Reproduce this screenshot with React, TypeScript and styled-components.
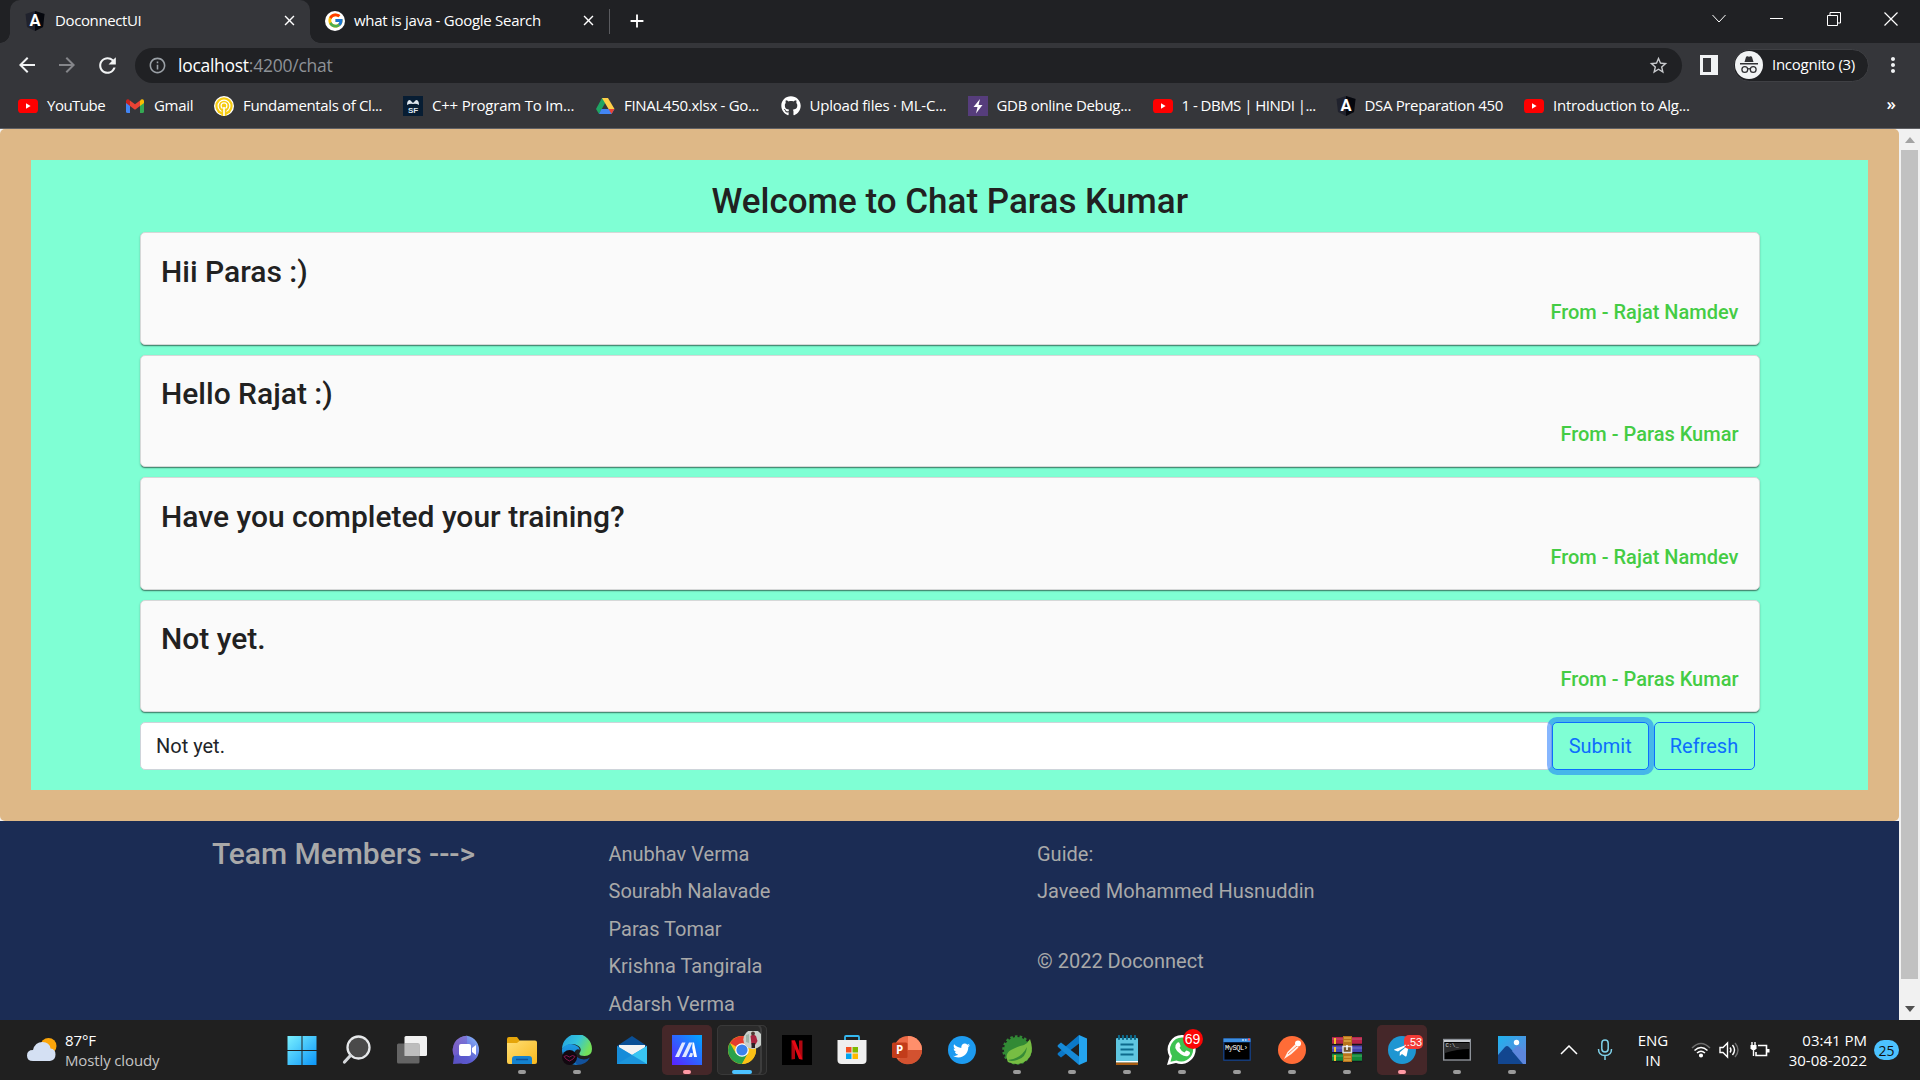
import React from 'react';
import styled, { createGlobalStyle } from 'styled-components';
import { FaGithub, FaTwitter, FaTelegramPlane } from 'react-icons/fa';
import { FcGoogle } from 'react-icons/fc';
import { MdArrowBack, MdArrowForward, MdRefresh, MdInfoOutline, MdStarBorder, MdAdd, MdClose, MdMoreVert } from 'react-icons/md';

const Global = createGlobalStyle`
  * { box-sizing: border-box; }
  html, body { margin: 0; padding: 0; overflow: hidden; }
  svg { display: block; flex: none; }
`;

const ui = `"Open Sans", "Noto Sans", sans-serif`;

const Screen = styled.div`
  width: 1920px;
  height: 1080px;
  display: flex;
  flex-direction: column;
  overflow: hidden;
  font-family: ${ui};
  background: #202124;
`;

/* ---------- browser chrome ---------- */
const TabStrip = styled.header`
  height: 43px;
  flex: none;
  display: flex;
  align-items: flex-start;
  background: #202124;
  padding-left: 10px;
`;
const Tab = styled.div<{ $active?: boolean; $w: number }>`
  position: relative;
  width: ${p => p.$w}px;
  height: 43px;
  padding: 0 12px 2px 15px;
  display: flex;
  align-items: center;
  gap: ${p => (p.$active ? 10 : 9)}px;
  color: #fff;
  background: ${p => (p.$active ? '#35363a' : 'transparent')};
  border-radius: 10px 10px 0 0;
  &::before, &::after {
    content: ${p => (p.$active ? '""' : 'none')};
    position: absolute;
    bottom: 0;
    width: 10px;
    height: 10px;
  }
  &::before {
    left: -10px;
    background: radial-gradient(circle at 0 0, transparent 9.5px, #35363a 10px);
  }
  &::after {
    right: -10px;
    background: radial-gradient(circle at 100% 0, transparent 9.5px, #35363a 10px);
  }
`;
const Label = styled.span<{ $ls?: number; $lift?: number }>`
  flex: 1;
  white-space: nowrap;
  font-size: 15px;
  line-height: 20px;
  padding-bottom: ${p => p.$lift ?? 0}px;
  letter-spacing: ${p => p.$ls ?? -0.3}px;
`;
const TabDivider = styled.i`
  width: 1px;
  height: 25px;
  margin-top: 9px;
  background: #5a5b5f;
`;
const NewTab = styled.div`
  padding: 10px 16px;
  color: #fff;
`;
const WindowButtons = styled.div`
  margin-left: auto;
  display: flex;
  height: 37px;
  align-items: center;
  color: #fff;
`;
const WindowButton = styled.div`
  width: 57.5px;
  display: flex;
  justify-content: center;
`;
const Toolbar = styled.div`
  height: 43px;
  flex: none;
  display: flex;
  align-items: center;
  background: #35363a;
  padding-top: 1px;
`;
const NavButton = styled.div<{ $dim?: boolean }>`
  width: 40px;
  display: flex;
  justify-content: center;
  color: ${p => (p.$dim ? '#85868a' : '#f1f3f4')};
`;
const NavGroup = styled.div`
  display: flex;
  align-items: center;
  width: 135px;
  padding-left: 7px;
`;
const Omnibox = styled.div`
  width: 1547px;
  height: 35px;
  border-radius: 18px;
  background: #202124;
  color: #9aa0a6;
  display: flex;
  align-items: center;
  padding: 0 13px;
  gap: 11px;
`;
const Url = styled.span`
  flex: 1;
  font-size: 17.5px;
  line-height: 24px;
  letter-spacing: -0.24px;
  color: #8e9297;
  b { color: #fff; font-weight: 400; letter-spacing: -0.28px; }
`;
const SidePanel = styled.div`
  width: 18px;
  height: 20px;
  margin: 0 15px 0 18px;
  border: 3px solid #f1f3f4;
  border-right-width: 7px;
`;
const Incognito = styled.div`
  width: 136px;
  height: 33px;
  border-radius: 17px;
  border: 1px solid #3f4044;
  background: #202124;
  color: #fff;
  display: flex;
  align-items: center;
  gap: 9px;
  padding-left: 1px;
`;
const Menu = styled.div`
  color: #f1f3f4;
  margin-left: 12px;
`;
const Bookmarks = styled.nav`
  height: 43px;
  flex: none;
  display: flex;
  align-items: center;
  padding: 0 0 3px 18px;
  background: #35363a;
  border-bottom: 1px solid #5f6064;
  color: #fff;
`;
const Bookmark = styled.div<{ $w: number }>`
  width: ${p => p.$w}px;
  display: flex;
  align-items: center;
  gap: 9px;
`;
const More = styled.span`
  margin-left: auto;
  margin-right: 24px;
  padding-bottom: 3px;
  font-size: 17px;
  line-height: 20px;
  font-weight: 600;
`;

/* ---------- page ---------- */
const Viewport = styled.div`
  height: 891px;
  flex: none;
  display: flex;
  overflow: hidden;
  background: #f4f4f4;
`;
const Page = styled.div`
  width: 1899px;
  font-family: Roboto, sans-serif;
  display: flex;
  flex-direction: column;
`;
const Frame = styled.section`
  height: 692px;
  flex: none;
  padding: 31px;
  background: #deb887;
  border-radius: 5px;
`;
const Chat = styled.main`
  height: 630px;
  padding: 20px 108.5px 0 109px;
  background: #7fffd4;
`;
const Title = styled.h2`
  margin: 0;
  height: 52px;
  padding-top: 1px;
  font-size: 35px;
  font-weight: 500;
  line-height: 42px;
  text-align: center;
  color: #212121;
`;
const Messages = styled.div`
  display: flex;
  flex-direction: column;
  gap: 10px;
`;
const Card = styled.article`
  height: 112.5px;
  padding: 20.5px 20px 0;
  border: 1px solid #d6d8d8;
  border-radius: 5px;
  background: #fafafa;
  box-shadow: 0 2px 1px -1px rgba(0, 0, 0, 0.35), 0 1px 2px rgba(0, 0, 0, 0.25);
`;
const Message = styled.h3`
  margin: 0 0 10px;
  font-size: 30px;
  font-weight: 500;
  line-height: 36px;
  color: #212121;
`;
const From = styled.div`
  font-size: 20px;
  font-weight: 500;
  line-height: 24.4px;
  text-align: right;
  color: #44cc44;
`;
const Composer = styled.div`
  display: flex;
  margin-top: 10.4px;
  height: 47.5px;
`;
const Input = styled.div`
  flex: 1;
  border: 1px solid #ced4da;
  border-radius: 5px;
  background: #fff;
  padding: 0 15px;
  font-size: 20px;
  line-height: 46.5px;
  color: #212529;
`;
const Button = styled.button<{ $w: number; $focus?: boolean }>`
  width: ${p => p.$w}px;
  height: 47.5px;
  flex: none;
  margin: 0 5px 0 0;
  padding: 0;
  border: 1px solid #0d6efd;
  border-radius: 5px;
  background: #7fffd4;
  color: #0d6efd;
  font: 400 20px/45px Roboto, sans-serif;
  box-shadow: ${p => (p.$focus ? '0 0 0 5px rgba(13, 110, 253, 0.5)' : 'none')};
`;
const Footer = styled.footer`
  flex: 1;
  display: grid;
  grid-template-columns: 396.5px 428.5px 1fr;
  padding: 14.5px 0 0 212px;
  background: #1b2c54;
  color: #a9a9a9;
  font-size: 20px;
`;
const TeamTitle = styled.div`
  font-size: 30px;
  font-weight: 500;
  line-height: 36px;
  letter-spacing: -0.04px;
`;
const FooterLine = styled.div<{ $gap?: number }>`
  height: 37.5px;
  line-height: 37.5px;
  margin-top: ${p => p.$gap ?? 0}px;
`;
const Scrollbar = styled.div`
  width: 21px;
  background: #f1f1f1;
  display: flex;
  flex-direction: column;
  align-items: center;
`;
const Arrow = styled.div<{ $down?: boolean }>`
  height: 21px;
  display: flex;
  align-items: center;
  color: ${p => (p.$down ? '#505050' : '#a3a3a3')};
  transform: ${p => (p.$down ? 'rotate(180deg)' : 'none')};
  margin-top: ${p => (p.$down ? 'auto' : '0')};
`;
const Thumb = styled.div`
  width: 17px;
  height: 829px;
  background: #c1c1c1;
`;

/* ---------- taskbar ---------- */
const Taskbar = styled.div`
  height: 60px;
  flex: none;
  display: flex;
  background: #202020;
  color: #fff;
`;
const Weather = styled.div`
  width: 274px;
  padding-left: 26.5px;
  display: flex;
  align-items: center;
  gap: 8.5px;
`;
const Stack = styled.div<{ $align?: string; $w?: number; $ls?: number }>`
  width: ${p => (p.$w ? p.$w + 'px' : 'auto')};
  text-align: ${p => p.$align ?? 'left'};
  font-size: 15px;
  line-height: 20px;
  letter-spacing: ${p => p.$ls ?? 0}px;
  white-space: nowrap;
`;
const Muted = styled.div`
  color: #c4c4c4;
`;
const Slot = styled.div`
  width: 55px;
  height: 60px;
  display: flex;
  justify-content: center;
  align-items: center;
`;
const Tile = styled.div<{ $tone?: string }>`
  position: relative;
  width: 50px;
  height: 50px;
  border-radius: 5px;
  display: flex;
  justify-content: center;
  align-items: center;
  background: ${p => (p.$tone === 'alert' ? '#452729' : p.$tone === 'active' ? '#2b2b2b' : 'transparent')};
  box-shadow: ${p => (p.$tone === 'active' ? 'inset 0 0 0 1px #393939, inset -6px 0 0 -1px #262626, inset -7px 0 0 #3d3d3d' : 'none')};
`;
const Run = styled.i<{ $kind: string }>`
  position: absolute;
  bottom: 1px;
  left: 50%;
  transform: translateX(-50%);
  width: ${p => (p.$kind === 'active' ? 20 : 8)}px;
  height: 4px;
  border-radius: 2px;
  background: ${p => (p.$kind === 'active' ? '#4cc2ff' : p.$kind === 'alert' ? '#ff99a4' : '#9a9a9a')};
`;
const Badge = styled.b<{ $soft?: boolean }>`
  position: absolute;
  left: ${p => (p.$soft ? 27 : 26)}px;
  top: ${p => (p.$soft ? 10 : 4)}px;
  width: ${p => (p.$soft ? 19 : 20)}px;
  height: ${p => (p.$soft ? 14 : 20)}px;
  border-radius: ${p => (p.$soft ? 5 : 10)}px;
  background: ${p => (p.$soft ? '#f23b36' : '#fb0505')};
  font: 400 ${p => (p.$soft ? 11 : 14)}px/${p => (p.$soft ? 14 : 20)}px "Liberation Sans", sans-serif;
  text-align: center;
`;
const Tray = styled.div`
  margin-left: auto;
  display: flex;
  align-items: center;
  padding-right: 21px;
`;
const TrayIcon = styled.div<{ $w: number }>`
  width: ${p => p.$w}px;
  display: flex;
  justify-content: center;
`;
const Count = styled.div`
  width: 25px;
  height: 20px;
  margin-left: 7px;
  border-radius: 10px;
  background: #4cc2ff;
  color: #111;
  font-size: 14px;
  line-height: 21px;
  text-align: center;
`;

/* ---------- icons ---------- */
const Angular = () => (
  <svg width="20" height="20" viewBox="0 0 20 20">
    <path d="M10 0 19.5 3 18 16 10 20 2 16 .5 3Z" fill="#20222d" />
    <path d="M10 0 19.5 3 18 16 10 20Z" fill="#05070d" />
    <text x="10" y="15" textAnchor="middle" fontSize="16.500" fontWeight="700" fontFamily="Roboto" fill="#fff">A</text>
  </svg>
);
const YouTube = () => (
  <svg width="20" height="20" viewBox="0 0 20 20">
    <rect x="0" y="3" width="20" height="14" rx="3.6" fill="#f00" />
    <path d="M8 7.300v5.400l4.600-2.700Z" fill="#fff" />
  </svg>
);
const Gmail = () => (
  <svg width="20" height="20" viewBox="0 0 20 20">
    <path d="M1 5v10.500q0 1.500 1.500 1.500H5V8Z" fill="#4285f4" />
    <path d="M19 5v10.500q0 1.500-1.500 1.500H15V8Z" fill="#34a853" />
    <path d="M15 5v5l4-3V5q-.3-2.700-3-1.500Z" fill="#fbbc04" />
    <path d="M1 5v2l4 3V5L4 3.500Q1.300 2.500 1 5Z" fill="#c5221f" />
    <path d="M5 4.500 10 8.300 15 4.500V10l-5 3.700L5 10Z" fill="#ea4335" />
  </svg>
);
const Rings = () => (
  <svg width="20" height="20" viewBox="0 0 20 20">
    <circle cx="10" cy="10" r="10" fill="#fff" />
    <circle cx="10" cy="10" r="8.700" fill="#f6cb12" />
    <circle cx="10" cy="10" r="5.900" fill="none" stroke="#fff" strokeWidth="1.200" />
    <circle cx="10" cy="9.800" r="2.900" fill="none" stroke="#fff" strokeWidth="1.200" />
    <path d="M7.500 12.500h5V20h-5Z" fill="#f6cb12" />
    <path d="M10 11v9" stroke="#fff" strokeWidth="1.600" />
  </svg>
);
const Sf = () => (
  <svg width="20" height="20" viewBox="0 0 20 20">
    <rect width="20" height="20" fill="#071d33" />
    <path d="M4 9q0-5 3-5l3 3 3-3q3 0 3 5-3-2-6-1-3-1-6 1Z" fill="#dfe7ee" />
    <text x="10" y="16.500" textAnchor="middle" fontSize="8" fontWeight="700" fontFamily="Liberation Sans" fill="#dfe7ee">SF</text>
  </svg>
);
const Drive = () => (
  <svg width="20" height="20" viewBox="0 0 20 20">
    <path d="M7 2h6L4 18 1 13Z" fill="#1fa463" />
    <path d="M7 2h6l6.500 11h-6Z" fill="#ffcf48" />
    <path d="M6.500 13h13L16.500 18H4Z" fill="#4285f4" />
    <path d="M13.500 13h6L16.500 18Z" fill="#ea4335" />
  </svg>
);
const Bolt = () => (
  <svg width="20" height="20" viewBox="0 0 20 20">
    <rect width="20" height="20" fill="#563d7c" />
    <path d="M12 3 5.500 11H9.500L8 17.500 14.500 9H10.500Z" fill="#fff" />
  </svg>
);
const GoogleDot = styled.span`
  width: 20px;
  height: 20px;
  flex: none;
  border-radius: 50%;
  background: #fff;
  display: grid;
  place-items: center;
`;
const Spy = () => (
  <svg width="28" height="28" viewBox="0 0 28 28">
    <circle cx="14" cy="14" r="14" fill="#f1f3f4" />
    <path d="M9.500 11 11 6q.5-1 1.500-.7l1.500.5 1.500-.5Q16.500 5 17 6l1.500 5ZM5 12h18v1.500H5Z" fill="#303134" />
    <g fill="none" stroke="#303134" strokeWidth="1.300"><circle cx="9.800" cy="18.500" r="2.900" /><circle cx="18.200" cy="18.500" r="2.900" /><path d="M12.700 18q1.300-.8 2.600 0" /></g>
  </svg>
);
const line = { fill: 'none', stroke: 'currentColor' };

const Svg = ({ children, s = 30 }: { children: React.ReactNode; s?: number }) => (
  <svg width={s} height={s} viewBox="0 0 30 30">{children}</svg>
);
const Grad = ({ id, a, b }: { id: string; a: string; b: string }) => (
  <linearGradient id={id} x1="0" y1="0" x2="1" y2="1"><stop stopColor={a} /><stop offset="1" stopColor={b} /></linearGradient>
);

const Windows = () => (
  <Svg><defs><linearGradient id="win" gradientUnits="userSpaceOnUse" x1="0" y1="0" x2="30" y2="30"><stop stopColor="#7df3ff" /><stop offset="1" stopColor="#0a94f8" /></linearGradient></defs>
    <path fill="url(#win)" d="M.5 1h14v14h-14ZM15.500 1h14v14h-14ZM.5 16h14v14h-14ZM15.500 16h14v14h-14Z" /></Svg>
);
const Search = () => (
  <Svg><circle cx="16.500" cy="12.500" r="11" fill="#4a4a4a" stroke="#e6e8ea" strokeWidth="2.300" /><path d="M8.500 20.500 2.500 27" stroke="#d5d8db" strokeWidth="3.200" strokeLinecap="round" /></Svg>
);
const TaskView = () => (
  <Svg><rect x="7.500" y="1" width="22.500" height="20" rx="1.500" fill="#f1f1f1" /><rect x="0" y="8.500" width="22.500" height="20" rx="1.500" fill="#6b6b6b" opacity=".9" /><rect x="7.500" y="8.500" width="15" height="12.500" fill="#bdbdbd" /></Svg>
);
const Meet = () => (
  <Svg><defs><Grad id="meet" a="#a968b0" b="#5b5fe0" /><linearGradient id="meet2" x1="1" y1="0" x2="0" y2="1"><stop stopColor="#8cc0ff" /><stop offset=".6" stopColor="#5b5bd0" /><stop offset="1" stopColor="#5a4fc0" /></linearGradient></defs>
    <path d="M15 .8A14.200 14.200 0 1 1 9 28.500L1 29 2 21A14.200 14.200 0 0 1 15 .8Z" fill="url(#meet2)" /><path d="M15 .8A14.200 14.200 0 0 0 2 21L15 15Z" fill="url(#meet)" opacity=".6" />
    <rect x="7" y="9" width="12" height="12" rx="2" fill="#fff" /><path d="m20 13 4-3v10l-4-3Z" fill="#fff" /></Svg>
);
const Folder = () => (
  <Svg><defs><Grad id="fold" a="#ffdf75" b="#f8b81d" /></defs><path d="M0 4q0-2 2-2h8l3 4h10v7H0Z" fill="#e5a50a" /><path d="M0 8h10l3-2.500h15q2 0 2 2V27q0 2-2 2H2q-2 0-2-2Z" fill="url(#fold)" />
    <path d="M5 29v-5q0-3 3-3h14q3 0 3 3v5Z" fill="#1482cf" /><path d="M9 24.500h12" stroke="#0c539b" strokeWidth="1.500" /></Svg>
);
const Edge = () => (
  <Svg>
    <defs>
      <linearGradient id="ed" x1="0" y1="0" x2="1" y2=".4"><stop stopColor="#229fe0" /><stop offset=".55" stopColor="#34c4dc" /><stop offset="1" stopColor="#73e05a" /></linearGradient>
      <linearGradient id="ed2" x1="0" y1="0" x2="0" y2="1"><stop stopColor="#1d9de6" /><stop offset="1" stopColor="#1270bd" /></linearGradient>
    </defs>
    <path d="M0 14A15 15 0 0 1 30 14q0 7-7.500 7-6 0-5-3 3-4-1-7-8-5-16.500 3Z" fill="url(#ed)" />
    <path d="M0 14Q5 7 13 10q5 2 4.500 5-2-2-4.500 1-2 6 3 14H14A15 15 0 0 1 0 14Z" fill="url(#ed2)" />
    <path d="M13 17q0 7 9 7.500 3 0 6-2-4 7.500-13 7.500-5-6-2-13Z" fill="#12529c" />
    <circle cx="7.500" cy="22.500" r="7.500" fill="#120810" /><path d="m2 21.500 2.500-1 3 1.500 3-1.500 2.500 1-2 2.500-3.500 2-3.500-2Z" fill="none" stroke="#a01a5c" strokeWidth=".8" />
  </Svg>
);
const Mail = () => (
  <Svg><path d="M0 11 15 1l15 10v9H0Z" fill="#0a4f95" /><path d="M2 10h26v10H2Z" fill="#f3f3f3" /><path d="M0 11l15 9L30 11v18H0Z" fill="#1b9be4" /><path d="M30 11 0 29h30Z" fill="#39c5f2" /><path d="m0 11 30 18H0Z" fill="#1588d6" opacity=".8" /></Svg>
);
const MyAsus = () => (
  <Svg><defs><linearGradient id="asus" x1="1" y1="0" x2="0" y2="1"><stop stopColor="#00a7ff" /><stop offset="1" stopColor="#5b20ff" /></linearGradient></defs><rect width="30" height="30" fill="url(#asus)" />
    <path d="M3 22 10 7.500H13.500L7 22ZM10 22 17 7.500h3.500L14 22Z" fill="#e0e8ff" /><path d="M20.500 7.500H22L25 22h-3L20.200 13Z" fill="#fff" /><path d="m16.500 22 2-4.200 2.500.7L20 22Z" fill="#dfe8ff" /></Svg>
);
const Chrome = () => (
  <svg width="38" height="38" viewBox="-4 1 38 38">
    <circle cx="15" cy="20" r="14" fill="#fbc116" />
    <path d="M15 20 2.900 13A14 14 0 0 1 27.100 13Z" fill="#e33b2e" />
    <path d="M2.900 13A14 14 0 0 0 15 34l6-10.500-6-3.500-6 3.500Z" fill="#29a24a" />
    <path d="M15 13.500H27.500A14 14 0 0 1 15 34l6-11Z" fill="#fbc116" />
    <circle cx="15" cy="20" r="6.800" fill="#fff" /><circle cx="15" cy="20" r="5.600" fill="#3b82ec" />
    <svg x="16" y="-1" width="20" height="20" viewBox="0 0 20 20" overflow="visible">
      <circle cx="10" cy="10.500" r="9.700" fill="#c9cfcb" />
      <path d="m3 6 3-1v9l-3-1Z" fill="#9db3a8" />
      <path d="M7.500 7q2.500-2.500 5.500 0l1.500 5-2 3.500h-4Z" fill="#a9233f" />
      <circle cx="10" cy="4.500" r="1.900" fill="#503832" />
      <path d="M8.500 14h3.500v5H8.500Z" fill="#2b2024" />
    </svg>
  </svg>
);
const Netflix = () => (
  <Svg><rect width="30" height="30" fill="#000" /><path d="M9.500 5.500h3.500v18.500l-3.500.5ZM17 5.500h3.500v19L17 24Z" fill="#b00610" /><path d="M9.500 5.500H13l7.500 19L17 24Z" fill="#e50914" /></Svg>
);
const Store = () => (
  <Svg><path d="M8 6V2q0-1 1-1h12q1 0 1 1v4" fill="none" stroke="#35b9f1" strokeWidth="1.800" /><path d="M.5 5h29v20q0 4-4 4h-21q-4 0-4-4Z" fill="#efefef" />
    <path d="M9 12h5.500v5.500H9Z" fill="#f25022" /><path d="M15.500 12H21v5.500h-5.500Z" fill="#7fba00" /><path d="M9 18.500h5.500V24H9Z" fill="#00a4ef" /><path d="M15.500 18.500H21V24h-5.500Z" fill="#ffb900" /></Svg>
);
const Ppt = () => (
  <Svg><circle cx="16" cy="15" r="14" fill="#ec6a46" /><path d="M16 1A14 14 0 0 1 30 15H16Z" fill="#ff8f6b" /><path d="M16 15h14a14 14 0 0 1-24 10Z" fill="#d35230" /><rect x="0" y="7.500" width="15.500" height="15.500" rx="1.500" fill="#c23c1a" /><text x="7.700" y="19.300" fontFamily="Open Sans" fontWeight="700" fontSize="11.500" textAnchor="middle" fill="#fff">P</text></Svg>
);
const Round = styled.span<{ $bg: string }>`
  width: 28px;
  height: 28px;
  border-radius: 50%;
  background: ${p => p.$bg};
  display: grid;
  place-items: center;
`;
const Twitter = () => <Round $bg="#1d9bf0"><FaTwitter size={17} /></Round>;
const Spring = () => (
  <Svg><circle cx="15" cy="15" r="13" fill="#328a35" /><circle cx="15" cy="15" r="13.500" fill="none" stroke="#328a35" strokeWidth="2.500" strokeDasharray="2.600 2.100" />
    <path d="M28 4q5 14-3 21-8 7-19 2Q2 19 9 15t13-5q4-2 6-6Z" fill="#77bd43" /><path d="M6 25q13-1 19-13-1 11-10 13-6 2-9 0Z" fill="#368b36" /></Svg>
);
const Code = () => (
  <Svg><path d="m22 0 8 3.500v23L22 30Z" fill="#24a4ef" /><path d="M22 0v8.500L4 22.500 1 20q-1-1 0-2Z" fill="#0b78c8" /><path d="M22 30v-8.500L4 7.500 1 10q-1 1 0 2Z" fill="#168ad8" /></Svg>
);
const Notepad = () => (
  <Svg><rect x="4" y="3" width="22" height="27" rx="1" fill="#5fc6e0" /><path d="M4 26h22v1.500H4Z" fill="#fff" /><path d="M4 27.500h22V30H4Z" fill="#a85c12" />
    <path d="M8.500 9.500h13M8.500 14.500h13M8.500 19.500h13" stroke="#0d6a8c" strokeWidth="1.800" /><path d="M7 1v3M11 1v3M15 1v3M19 1v3M23 1v3" stroke="#0d6a8c" strokeWidth="2.200" strokeLinecap="round" /></Svg>
);
const WhatsApp = () => (
  <Svg><path d="M15.500 0A14.500 14.500 0 1 1 9 28L0 30 2.500 21.500A14.500 14.500 0 0 1 15.500 0Z" fill="#fff" /><path d="M15.500 2.500A12 12 0 1 1 9.500 25.500L3.500 26.700 5 21A12 12 0 0 1 15.500 2.500Z" fill="#3cc351" />
    <path d="M10 8q1.500-1.500 2.500 0l1 2.700q.3.800-1 2 1.500 3.300 5 4.700l1.500-1.600q.6-.5 1.300-.1l2.500 1.400q1 2-1.500 3.700-3 1.500-7.500-1.500T8.300 13Q7.700 10 10 8Z" fill="#fff" /></Svg>
);
const MySql = () => (
  <Svg><rect x="1" y="3" width="28" height="23" rx="1" fill="#153b78" /><rect x="1.500" y="3.500" width="27" height="3.500" fill="#3e8fe0" /><rect x="2.500" y="7.500" width="25" height="17" fill="#000" /><path d="M20 5h2M23 5h1.500" stroke="#fff" /><path d="M26 4.500h2" stroke="#f55" strokeWidth="2" /><text x="3" y="15" fontFamily="Liberation Mono" fontSize="7" textLength="23" fill="#fff">MySQL›</text></Svg>
);
const Postman = () => (
  <Svg><circle cx="15" cy="15" r="14" fill="#ff6c37" /><circle cx="21" cy="8.500" r="3" fill="#fff" /><path d="m18 9.500 3.500 3-7 6.500L7 24l3.500-7Z" fill="#fff0e8" /><path d="m20 11-9 8" stroke="#ff6c37" strokeWidth=".8" /></Svg>
);
const WinRar = () => (
  <Svg><rect x="0" y="2" width="30" height="8.500" fill="#b8244a" /><rect x="0" y="10.500" width="30" height="8" fill="#4745b4" /><rect x="0" y="18.500" width="30" height="8.500" fill="#128a3a" />
    <path d="M0 4h30M0 13h30M0 21h30" stroke="#fff" strokeWidth="1" opacity=".25" /><path d="M0 9.500h30M0 17.800h30M0 26.500h30" stroke="#15151c" strokeWidth="1.500" /><path d="M3 3v6M3 12v5M3 20v6" stroke="#f2c12c" strokeWidth="2" />
    <rect x="11" y="1" width="9" height="26" fill="#b8741c" /><path d="M12 3h7M12 6h7M12 22h7M12 25h7" stroke="#f0be55" strokeWidth="1.200" /><rect x="11" y="11.500" width="8.500" height="6" fill="#72532b" stroke="#ddd" strokeWidth="1.500" /><path d="M15 10v5" stroke="#fff" strokeWidth="1.500" /></Svg>
);
const Telegram = () => <Round $bg="#1e96d2"><FaTelegramPlane size={17} /></Round>;
const Cmd = () => (
  <Svg><rect x="1.700" y="4.500" width="26.600" height="20.500" fill="#000" stroke="#8d9299" strokeWidth="1.400" /><path d="M2 5h26v2H2Z" fill="#c9cdd2" /><path d="M3 8h24v6q-12 0-24 4Z" fill="#4a4a4a" opacity=".6" /><text x="3.500" y="12" fontFamily="Liberation Mono" fontSize="5.500" fill="#ddd">C:\_</text></Svg>
);
const Photos = () => (
  <Svg><defs><Grad id="ph" a="#1fb2ee" b="#6b7fd8" /></defs><rect x="1" y="1" width="28" height="28" fill="url(#ph)" /><path d="M1 20 8 12q2-2 4 0L28 29H1Z" fill="#12468f" /><path d="m15 16 4-4q2-2 4 0l6 6v11h-3Z" fill="#5c86dc" /><circle cx="19.500" cy="7.500" r="2.700" fill="#fff" /></Svg>
);

type App = { icon: React.ReactNode; run?: string; badge?: string };
const apps: App[] = [
  { icon: <Windows /> }, { icon: <Search /> }, { icon: <TaskView /> }, { icon: <Meet /> },
  { icon: <Folder />, run: 'idle' }, { icon: <Edge />, run: 'idle' }, { icon: <Mail /> },
  { icon: <MyAsus />, run: 'alert' }, { icon: <Chrome />, run: 'active' }, { icon: <Netflix /> },
  { icon: <Store /> }, { icon: <Ppt /> }, { icon: <Twitter /> }, { icon: <Spring />, run: 'idle' },
  { icon: <Code />, run: 'idle' }, { icon: <Notepad />, run: 'idle' }, { icon: <WhatsApp />, run: 'idle', badge: '69' },
  { icon: <MySql />, run: 'idle' }, { icon: <Postman />, run: 'idle' }, { icon: <WinRar />, run: 'idle' },
  { icon: <Telegram />, run: 'alert', badge: '..53' }, { icon: <Cmd />, run: 'idle' }, { icon: <Photos />, run: 'idle' },
];

const bookmarks = [
  { icon: <YouTube />, text: 'YouTube', w: 107, ls: -0.5 },
  { icon: <Gmail />, text: 'Gmail', w: 89, ls: -0.3 },
  { icon: <Rings />, text: 'Fundamentals of Cl...', w: 189, ls: -0.36 },
  { icon: <Sf />, text: 'C++ Program To Im...', w: 192, ls: -0.2 },
  { icon: <Drive />, text: 'FINAL450.xlsx - Go...', w: 185.5, ls: -0.3 },
  { icon: <FaGithub size={20} />, text: 'Upload files · ML-C...', w: 187, ls: -0.22 },
  { icon: <Bolt />, text: 'GDB online Debug...', w: 185, ls: -0.3 },
  { icon: <YouTube />, text: '1 - DBMS | HINDI |...', w: 183, ls: -0.52 },
  { icon: <Angular />, text: 'DSA Preparation 450', w: 188.5, ls: -0.34 },
  { icon: <YouTube />, text: 'Introduction to Alg...', w: 170, ls: -0.25 },
];

const messages = [
  ['Hii Paras :)', 'Rajat Namdev'],
  ['Hello Rajat :)', 'Paras Kumar'],
  ['Have you completed your training?', 'Rajat Namdev'],
  ['Not yet.', 'Paras Kumar'],
];

export default function App() {
  return (
    <Screen>
      <Global />
      <TabStrip>
        <Tab $active $w={300}><Angular /><Label $ls={-0.38} $lift={1}>DoconnectUI</Label><MdClose size={17} /></Tab>
        <Tab $w={299}><GoogleDot><FcGoogle size={17} /></GoogleDot><Label $ls={-0.27} $lift={1}>what is java - Google Search</Label><MdClose size={17} /></Tab>
        <TabDivider />
        <NewTab><MdAdd size={22} /></NewTab>
        <WindowButtons>
          <WindowButton><svg width="14" height="9" {...line}><path d="m.5 1 6.500 7 6.500-7" /></svg></WindowButton>
          <WindowButton><svg width="13" height="2"><path d="M0 .5h13" stroke="#fff" /></svg></WindowButton>
          <WindowButton><svg width="14" height="14" {...line}><path d="M.5 3.500h10v10H.500ZM3 3V.5h10.500V11H11" /></svg></WindowButton>
          <WindowButton><svg width="14" height="14" {...line} strokeWidth="1.200"><path d="m.5.5 13 13M13.500.5l-13 13" /></svg></WindowButton>
        </WindowButtons>
      </TabStrip>
      <Toolbar>
        <NavGroup>
          <NavButton><MdArrowBack size={24} /></NavButton>
          <NavButton $dim><MdArrowForward size={24} /></NavButton>
          <NavButton><MdRefresh size={25} /></NavButton>
        </NavGroup>
        <Omnibox>
          <MdInfoOutline size={19} />
          <Url><b>localhost</b>:4200/chat</Url>
          <MdStarBorder size={21} color="#c8cacd" />
        </Omnibox>
        <SidePanel />
        <Incognito><Spy /><Label $lift={2} $ls={-0.26}>Incognito (3)</Label></Incognito>
        <Menu><MdMoreVert size={24} /></Menu>
      </Toolbar>
      <Bookmarks>
        {bookmarks.map(b => (
          <Bookmark key={b.text} $w={b.w}>{b.icon}<Label $ls={b.ls} $lift={2}>{b.text}</Label></Bookmark>
        ))}
        <More>»</More>
      </Bookmarks>

      <Viewport>
        <Page>
          <Frame>
            <Chat>
              <Title>Welcome to Chat Paras Kumar</Title>
              <Messages>
                {messages.map(([text, from]) => (
                  <Card key={text}><Message>{text}</Message><From>From - {from}</From></Card>
                ))}
              </Messages>
              <Composer>
                <Input>Not yet.</Input>
                <Button $w={96.5} $focus>Submit</Button>
                <Button $w={101}>Refresh</Button>
              </Composer>
            </Chat>
          </Frame>
          <Footer>
            <TeamTitle>Team Members ---&gt;</TeamTitle>
            <div>
              {['Anubhav Verma', 'Sourabh Nalavade', 'Paras Tomar', 'Krishna Tangirala', 'Adarsh Verma'].map(n => (
                <FooterLine key={n}>{n}</FooterLine>
              ))}
            </div>
            <div>
              <FooterLine>Guide:</FooterLine>
              <FooterLine>Javeed Mohammed Husnuddin</FooterLine>
              <FooterLine $gap={32}>© 2022 Doconnect</FooterLine>
            </div>
          </Footer>
        </Page>
        <Scrollbar>
          <Arrow><svg width="10" height="6"><path d="M0 6 5 0l5 6Z" fill="currentColor" /></svg></Arrow>
          <Thumb />
          <Arrow $down><svg width="10" height="6"><path d="M0 6 5 0l5 6Z" fill="currentColor" /></svg></Arrow>
        </Scrollbar>
      </Viewport>

      <Taskbar>
        <Weather>
          <svg width="30" height="26" viewBox="0 0 30 26"><circle cx="21.500" cy="9" r="8" fill="#fba50a" /><path d="M6 24q-6 0-6-5.500T6 13q2-8 9.500-8 7 0 8 6.500 5 .5 5 6T23 24Z" fill="#d4e0f3" /></svg>
          <Stack $ls={-0.13}>87°F<Muted>Mostly cloudy</Muted></Stack>
        </Weather>
        {apps.map((a, i) => (
          <Slot key={i}>
            <Tile $tone={a.run}>
              {a.icon}
              {a.badge && <Badge $soft={a.badge !== '69'}>{a.badge}</Badge>}
              {a.run && <Run $kind={a.run} />}
            </Tile>
          </Slot>
        ))}
        <Tray>
          <TrayIcon $w={40}><svg width="18" height="10" {...line} strokeWidth="1.500"><path d="m1 9 8-8 8 8" /></svg></TrayIcon>
          <TrayIcon $w={31}><svg width="16" height="22" fill="none" stroke="#7fd0e8" strokeWidth="1.500"><rect x="4.800" y="1" width="6.400" height="12" rx="3.200" /><path d="M1.500 10q0 6.500 6.500 6.500t6.500-6.500M8 16.500V21" /></svg></TrayIcon>
          <Stack $align="center" $w={66}>ENG<br />IN</Stack>
          <TrayIcon $w={29}><svg width="20" height="16" {...line} strokeWidth="1.500"><path d="M1 6q9-9 18 0" opacity=".35" /><path d="M3.500 8.500q6.500-6 13 0M6 11q4-3.500 8 0" /><circle cx="10" cy="13.500" r="1.300" fill="currentColor" /></svg></TrayIcon>
          <TrayIcon $w={29}><svg width="21" height="18" {...line} strokeWidth="1.400"><path d="M1 6.500h3L8.500 2v14L4 11.500H1ZM11 6.500q2 2.500 0 5M13.500 4q4 5 0 10" /><path d="M16 2q6 7 0 14" opacity=".35" /></svg></TrayIcon>
          <TrayIcon $w={32}><svg width="20" height="18" {...line} strokeWidth="1.600"><path d="M8 4.500h8.500V14.500H6V11" /><path d="M17 8h2.500v3.500H17Z" fill="currentColor" stroke="none" /><path d="M.5 4h6v3.500L5 9H2L.5 7.500Z" fill="currentColor" stroke="none" /><path d="M2 1v3M5 1v3M3.500 8v7" strokeWidth="1.400" /></svg></TrayIcon>
          <Stack $align="right" $w={91}>03:41 PM<br />30-08-2022</Stack>
          <Count>25</Count>
        </Tray>
      </Taskbar>
    </Screen>
  );
}
